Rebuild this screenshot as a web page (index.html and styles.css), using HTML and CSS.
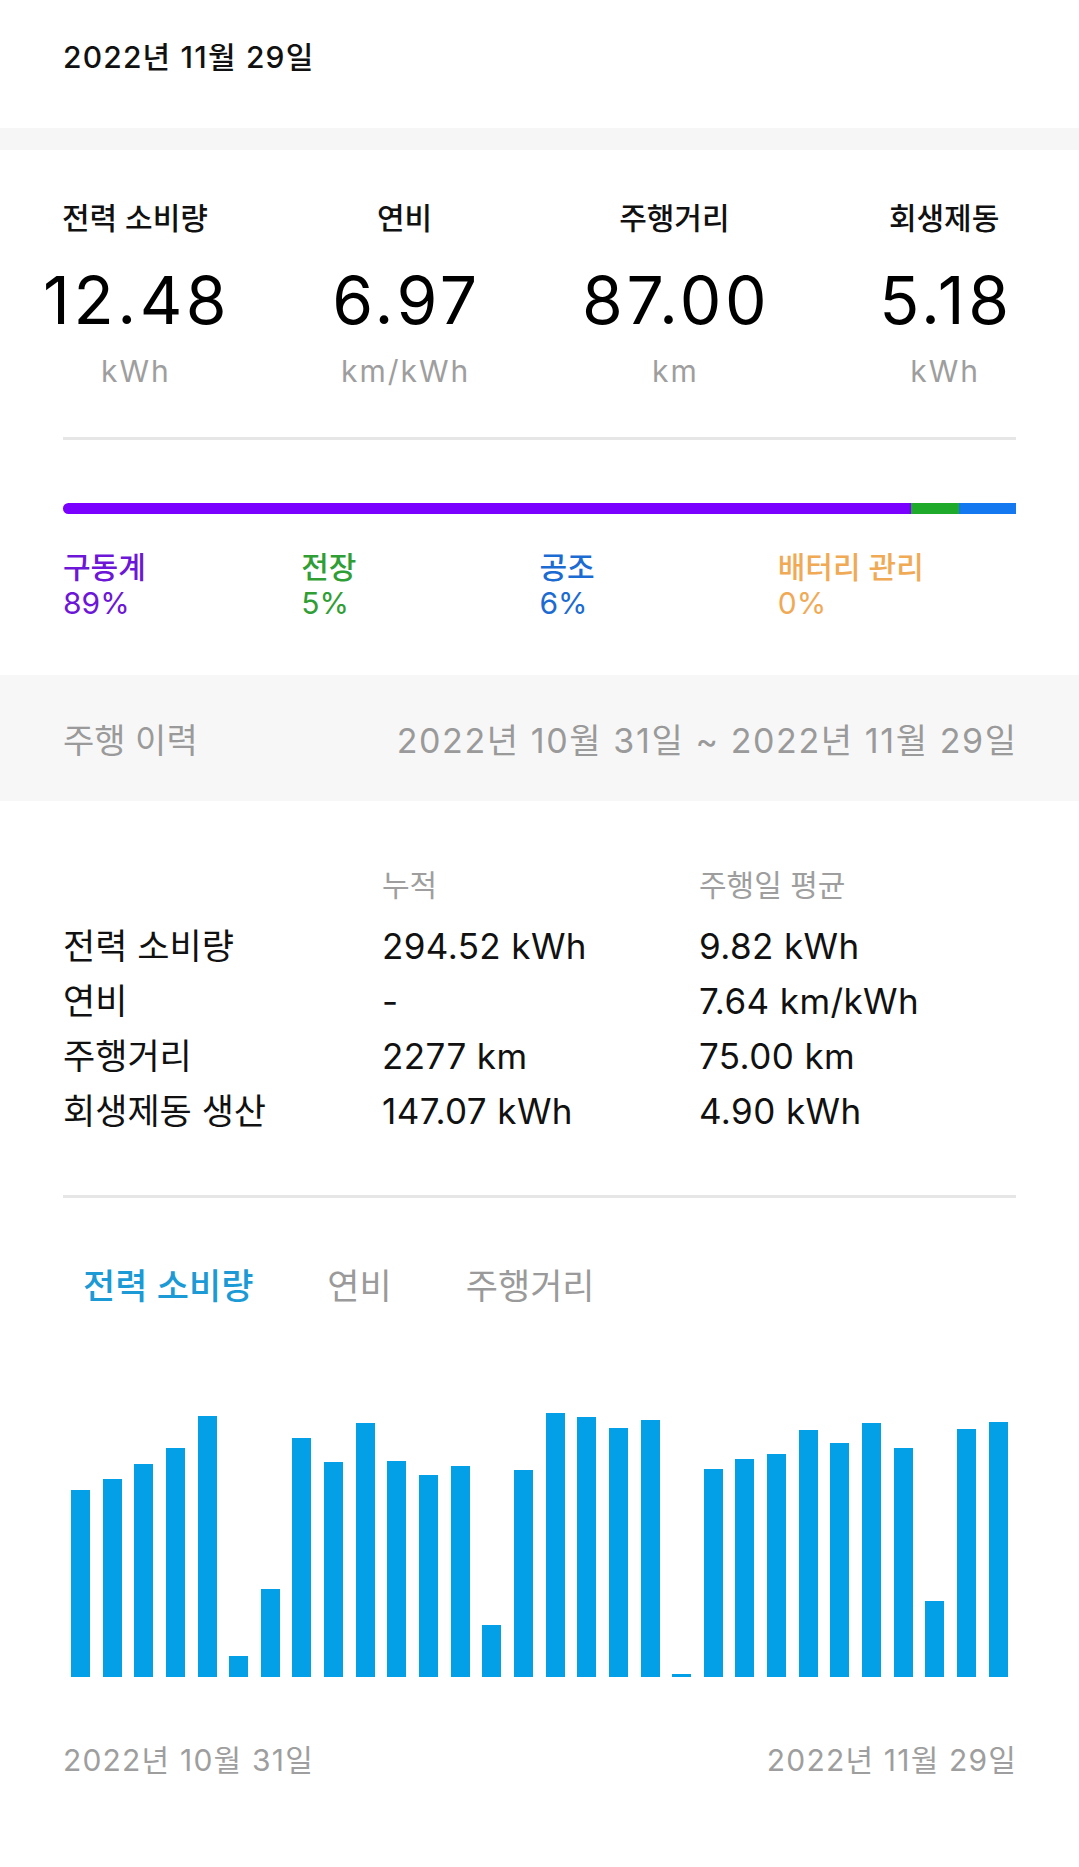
FILE: index.html
```html
<!DOCTYPE html>
<html lang="ko">
<head>
  <meta charset="UTF-8">
  <title>주행 정보</title>
  <link rel="stylesheet" href="styles.css">
</head>
<body>
  <div class="top">2022년 11월 29일</div>
  <div class="gap"></div>

  <div class="stats">
    <div class="stat">
      <div class="stat-label">전력 소비량</div>
      <div class="stat-value">12.48</div>
      <div class="stat-unit">kWh</div>
    </div>
    <div class="stat">
      <div class="stat-label">연비</div>
      <div class="stat-value">6.97</div>
      <div class="stat-unit">km/kWh</div>
    </div>
    <div class="stat">
      <div class="stat-label">주행거리</div>
      <div class="stat-value">87.00</div>
      <div class="stat-unit">km</div>
    </div>
    <div class="stat">
      <div class="stat-label">회생제동</div>
      <div class="stat-value">5.18</div>
      <div class="stat-unit">kWh</div>
    </div>
  </div>

  <div class="usage">
    <hr class="line">
    <div class="usage-bar">
      <span class="seg drive" style="width: 89%"></span>
      <span class="seg elec" style="width: 5%"></span>
      <span class="seg air" style="width: 6%"></span>
    </div>
    <div class="legend">
      <div class="legend-item drive-text"><div class="legend-name">구동계</div><div>89%</div></div>
      <div class="legend-item elec-text"><div class="legend-name">전장</div><div>5%</div></div>
      <div class="legend-item air-text"><div class="legend-name">공조</div><div>6%</div></div>
      <div class="legend-item batt-text"><div class="legend-name">배터리 관리</div><div>0%</div></div>
    </div>
  </div>

  <div class="history-head">
    <span>주행 이력</span>
    <span class="range">2022년 10월 31일 ~ 2022년 11월 29일</span>
  </div>

  <div class="history">
    <div class="hist-table">
      <div></div><div class="hist-th">누적</div><div class="hist-th">주행일 평균</div>
      <div class="hist-row">전력 소비량</div><div class="hist-row num">294.52 kWh</div><div class="hist-row num">9.82 kWh</div>
      <div class="hist-row">연비</div><div class="hist-row num">-</div><div class="hist-row num">7.64 km/kWh</div>
      <div class="hist-row">주행거리</div><div class="hist-row num">2277 km</div><div class="hist-row num">75.00 km</div>
      <div class="hist-row">회생제동 생산</div><div class="hist-row num">147.07 kWh</div><div class="hist-row num">4.90 kWh</div>
    </div>
    <hr class="line">
    <div class="tabs">
      <span class="tab active">전력 소비량</span>
      <span class="tab">연비</span>
      <span class="tab">주행거리</span>
    </div>
    <div class="chart" id="chart"></div>
    <div class="chart-dates">
      <span>2022년 10월 31일</span>
      <span>2022년 11월 29일</span>
    </div>
  </div>

  <script>
    // 일별 전력 소비량 (막대 높이, px)
    const daily = [187, 198, 213, 229, 261, 21, 88, 239, 215, 254, 216, 202, 211, 52, 207,
                   264, 260, 249, 257, 3, 208, 218, 223, 247, 234, 254, 229, 76, 248, 255];

    const chart = document.getElementById('chart');
    daily.forEach(h => {
      const bar = document.createElement('span');
      bar.className = 'bar';
      bar.style.height = h + 'px';
      chart.appendChild(bar);
    });
  </script>
</body>
</html>
```

FILE: styles.css
```css
body { margin: 0; background: #fff; color: #111; font-family: Inter, "Noto Sans CJK KR", sans-serif; }

.top { height: 128px; box-sizing: border-box; padding: 38px 63px 0; font-size: 30px; line-height: 38px; font-weight: 500; letter-spacing: 1.2px; }
.gap { height: 22px; background: #f6f6f6; }

.stats { display: grid; grid-template-columns: repeat(4, 1fr); padding-top: 49px; text-align: center; }
.stat-label { font-size: 30px; line-height: 38px; font-weight: 500; }
.stat-value { margin-top: 23px; padding-left: 3.5px; font-size: 66px; line-height: 80px; color: #000; letter-spacing: 3.5px; }
.stat-unit { margin-top: 12px; padding-left: 2px; font-size: 30px; line-height: 38px; color: #9e9e9e; letter-spacing: 2px; }

.usage { padding: 47px 63px 54px; }
.line { margin: 0; border: 0; height: 3px; background: #e6e6e6; }
.usage-bar { display: flex; height: 11px; margin-top: 63px; border-radius: 6px 0 0 6px; overflow: hidden; }
.seg { display: block; height: 100%; }
.drive { background: #7a00ff; }
.elec { background: #20aa2c; }
.air { background: #1478f0; }

.legend { display: grid; grid-template-columns: repeat(4, 1fr); margin-top: 35px; font-size: 30px; line-height: 36px; }
.legend-name { font-weight: 500; }
.drive-text { color: #6d16d8; }
.elec-text { color: #2f9e35; }
.air-text { color: #1b6bd2; }
.batt-text { color: #f0aa55; }

.history-head { display: flex; justify-content: space-between; align-items: center; height: 126px; padding: 0 63px; background: #f7f7f7; color: #9a9a9a; font-size: 34px; }
.range { letter-spacing: 1.6px; margin-right: -1.6px; }

.history { padding: 64px 63px 0; }
.hist-table { display: grid; grid-template-columns: 319px 317px 1fr; }
.hist-th { font-size: 30px; line-height: 40px; color: #9e9e9e; margin-bottom: 14px; }
.hist-row { font-size: 35px; line-height: 55px; }
.hist-row.num { letter-spacing: 0.4px; }
.history .line { margin-top: 56px; }

.tabs { display: flex; gap: 33px; margin-top: 63px; }
.tab { padding: 0 21px 0 20px; font-size: 35px; line-height: 50px; color: #9a9a9a; }
.tab.active { color: #1b9ad6; font-weight: 500; }

.chart { display: flex; justify-content: space-between; align-items: flex-end; height: 280px; margin-top: 86px; padding: 0 8px; }
.bar { display: block; width: 19px; background: #03a0e8; }

.chart-dates { display: flex; justify-content: space-between; margin-top: 64px; margin-right: -1.2px; font-size: 30px; line-height: 38px; color: #9e9e9e; letter-spacing: 1.2px; }
```
